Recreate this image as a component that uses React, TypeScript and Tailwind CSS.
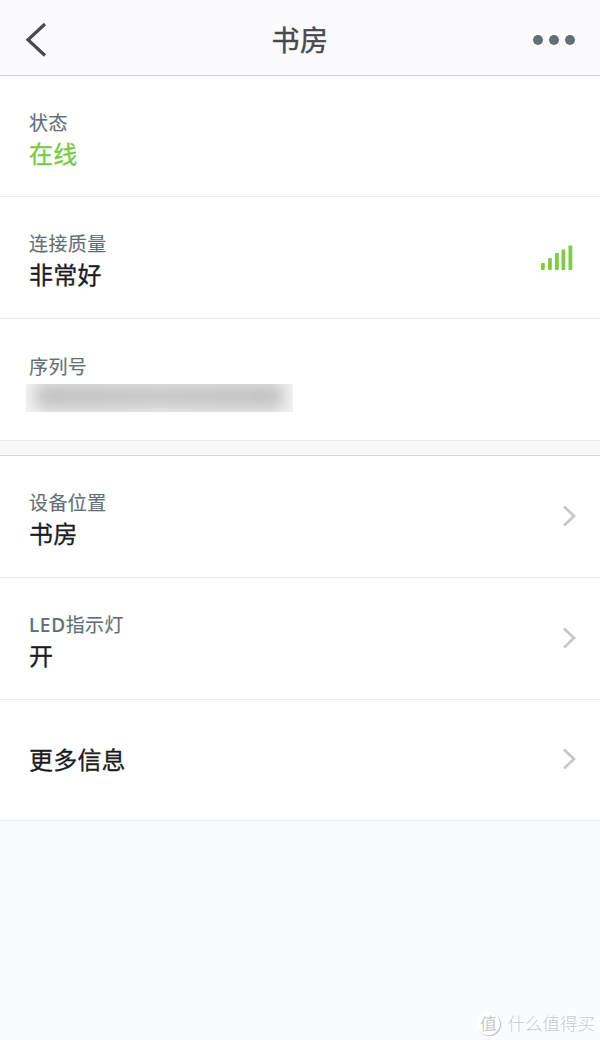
import React from "react";

interface RowProps {
  label?: React.ReactNode;
  value?: string;
  valueClass?: string;
  heightClass?: string;
  right?: React.ReactNode;
  children?: React.ReactNode;
}

const ArrowRight: React.FC = () => (
  <svg className="mb-[2px]" width="14" height="22" viewBox="0 0 14 22" fill="none">
    <path d="M2 1.5L12 11L2 20.5" stroke="#c7c7cb" strokeWidth="2.6" />
  </svg>
);

const signalBars = [
  { x: 0, height: 7 },
  { x: 7, height: 12 },
  { x: 14, height: 17 },
  { x: 20.5, height: 20.5 },
  { x: 27.5, height: 24.5 },
];

const SignalIcon: React.FC = () => (
  <svg className="mb-px mr-[3px]" width="32" height="25" viewBox="0 0 32 25" fill="#7ecb48">
    {signalBars.map(({ x, height }) => (
      <rect key={x} x={x} y={25 - height} width="3.8" height={height} rx="0.8" />
    ))}
  </svg>
);

const Row: React.FC<RowProps> = ({
  label,
  value,
  valueClass = "text-[#1c1c1c]",
  heightClass = "h-[122px]",
  right,
  children,
}) => (
  <div
    className={`flex items-center justify-between border-b border-[#ececee] bg-white pl-[29px] pr-6 ${heightClass}`}
  >
    <div className={label ? "pt-[5px]" : "pb-[2px]"}>
      {label && (
        <div className="text-[19px] leading-[28px] tracking-[0.4px] text-[#636f75] [-webkit-text-stroke:0.15px]">
          {label}
        </div>
      )}
      {value && (
        <div
          className={`text-[24px] leading-[34px] tracking-[0.2px] [-webkit-text-stroke:0.3px] ${valueClass}`}
        >
          {value}
        </div>
      )}
      {children}
    </div>
    {right}
  </div>
);

const App: React.FC = () => {
  return (
    <div className="flex h-[1040px] w-[600px] flex-col overflow-hidden bg-[#fafbfd] font-['Noto_Sans_CJK_SC',sans-serif]">
      <header className="flex h-[76px] shrink-0 items-center justify-between border-b border-[#d3d3d6] bg-[#fbfbfd] px-[25px] pt-1">
        <svg width="44" height="36" viewBox="0 0 44 36" fill="none">
          <path d="M20 2L3 17.7L20 33.5" stroke="#4a4a4a" strokeWidth="3.2" />
        </svg>
        <h1 className="pb-[2px] text-[28px] leading-[40px] tracking-[0.6px] text-[#484848] [-webkit-text-stroke:0.4px]">
          书房
        </h1>
        <div className="flex w-11 justify-end gap-[6px]">
          <span className="size-[10px] rounded-full bg-[#626f73]" />
          <span className="size-[10px] rounded-full bg-[#626f73]" />
          <span className="size-[10px] rounded-full bg-[#626f73]" />
        </div>
      </header>

      <section>
        <Row label="状态" value="在线" valueClass="text-[#7ac943]" heightClass="h-[121px]" />
        <Row label="连接质量" value="非常好" right={<SignalIcon />} />
        <Row label="序列号">
          {/* Serial number is masked */}
          <div className="-ml-[3px] mb-px mt-[4px] h-[28px] w-[267px] overflow-hidden bg-[#f3f3f3]">
            <div className="mx-[10px] -mt-px h-[26px] bg-linear-to-r from-[#c0c0c0] via-[#c6c6c6] to-[#c0c0c0] blur-[8px]" />
          </div>
        </Row>
      </section>

      <div className="h-[15px] shrink-0 border-b border-[#d8d8dc] bg-[#f8f8fa]" />

      <section>
        <Row label="设备位置" value="书房" right={<ArrowRight />} />
        <Row
          label={
            <>
              <span className="font-['Noto_Sans',sans-serif] font-medium leading-none tracking-[0.7px]">LED</span>
              指示灯
            </>
          }
          value="开"
          right={<ArrowRight />}
        />
        <Row value="更多信息" heightClass="h-[121px]" right={<ArrowRight />} />
      </section>

      <footer className="mt-auto flex items-center justify-end gap-2 pb-1 pr-[5px] text-[#c9cacc]">
        <span className="flex size-[23px] items-center justify-center rounded-full bg-white text-[17px] leading-none shadow-[1px_1px_1px_#c2c3c5]">
          <span className="-rotate-6 -skew-x-6 pb-[2px]">值</span>
        </span>
        <span className="text-[17.5px] font-light leading-[26px] [text-shadow:-1px_-1px_0_#fff]">什么值得买</span>
      </footer>
    </div>
  );
};

export default App;
